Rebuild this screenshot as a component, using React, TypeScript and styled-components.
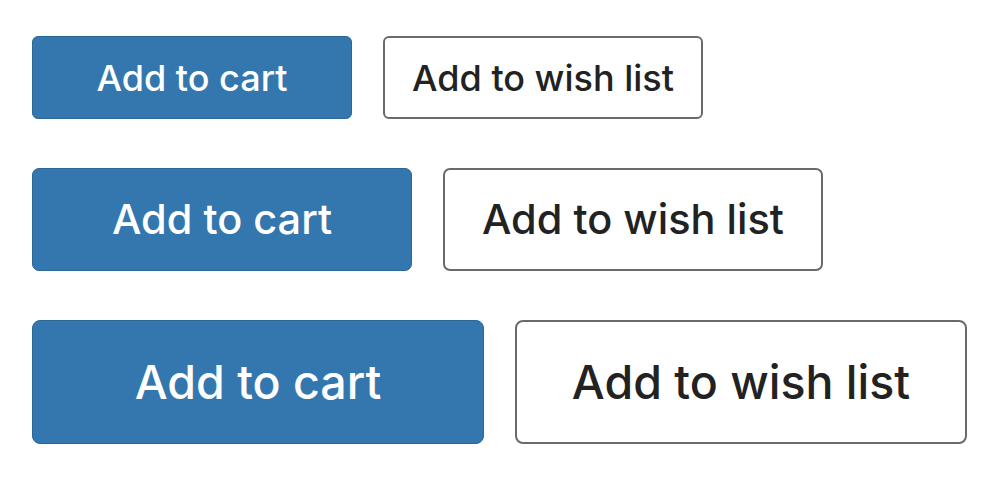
import React from 'react';
import styled, { createGlobalStyle } from 'styled-components';

const GlobalStyle = createGlobalStyle`
  html, body {
    margin: 0;
    padding: 0;
    background: #ffffff;
  }
`;

type Size = 'sm' | 'md' | 'lg';

const sizes: Record<Size, { w: number; h: number; font: number; radius: number }> = {
  sm: { w: 320, h: 83, font: 36, radius: 6 },
  md: { w: 380, h: 103, font: 41.5, radius: 7 },
  lg: { w: 452, h: 124, font: 46.5, radius: 8 },
};

const Page = styled.div`
  display: flex;
  flex-direction: column;
  gap: 49px;
  padding: 36px 32px;
  font-family: Inter, 'Liberation Sans', sans-serif;
`;

const Row = styled.div`
  display: flex;
  gap: 31px;
`;

const Button = styled.button<{ size: Size; primary?: boolean }>`
  box-sizing: border-box;
  display: flex;
  align-items: center;
  justify-content: center;
  width: ${p => sizes[p.size].w}px;
  height: ${p => sizes[p.size].h}px;
  border-radius: ${p => sizes[p.size].radius}px;
  font-family: inherit;
  font-size: ${p => sizes[p.size].font}px;
  font-weight: 500;
  line-height: 1;
  padding: 0;
  cursor: pointer;
  background: ${p => p.primary ? '#3377ae' : '#ffffff'};
  color: ${p => p.primary ? '#ffffff' : '#222222'};
  border: ${p => p.primary ? '1px solid #2b6797' : '2px solid #6a6a6a'};
`;

const App: React.FC = () => {
  const rows: Size[] = ['sm', 'md', 'lg'];

  return (
    <>
      <GlobalStyle />
      <Page>
        {rows.map(size => (
          <Row key={size}>
            <Button size={size} primary>Add to cart</Button>
            <Button size={size}>Add to wish list</Button>
          </Row>
        ))}
      </Page>
    </>
  );
};

export default App;
